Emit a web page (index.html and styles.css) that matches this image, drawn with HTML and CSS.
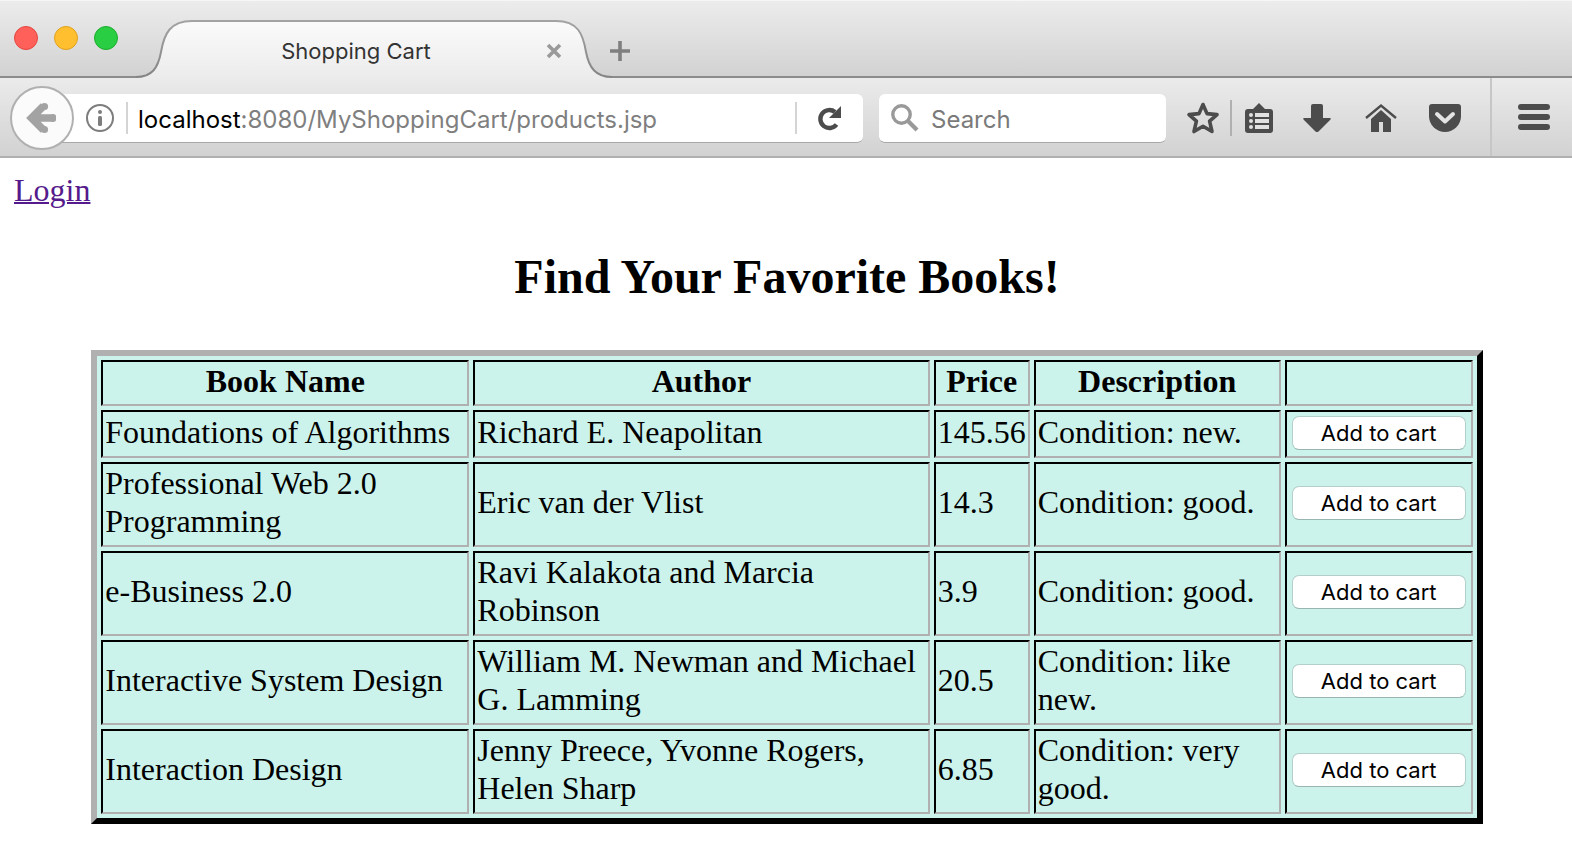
FILE: index.html
```html
<!DOCTYPE html>
<html lang="en">
<head>
<meta charset="utf-8">
<title>Shopping Cart</title>
<link rel="stylesheet" href="styles.css">
</head>
<body>
<header class="browser">
  <div class="tab-strip">
    <div class="lights">
      <button class="light light-close" aria-label="Close window"></button>
      <button class="light light-min" aria-label="Minimize window"></button>
      <button class="light light-max" aria-label="Zoom window"></button>
    </div>
    <div class="tab">
      <svg class="tab-shape" width="478" height="80" viewBox="0 0 478 80" aria-hidden="true">
        <defs>
          <linearGradient id="tabFill" x1="0" y1="0" x2="0" y2="1"><stop offset="0" stop-color="#fbfbfb"/><stop offset="1" stop-color="#ebebeb"/></linearGradient>
          <linearGradient id="tabLine" x1="0" y1="0" x2="0" y2="1"><stop offset="0" stop-color="#a3a3a3"/><stop offset="1" stop-color="#848484"/></linearGradient>
        </defs>
        <path fill="url(#tabFill)" d="M0 80V77C16 77 22 68 25 52C28 34 34 21 56 21H420C442 21 447 34 450 52C453 68 460 77 476 77V80Z"/>
        <path fill="none" stroke="url(#tabLine)" stroke-width="2" d="M0 77C16 77 22 68 25 52C28 34 34 21 56 21H420C442 21 447 34 450 52C453 68 460 77 476 77"/>
      </svg>
      <span class="tab-title">Shopping Cart</span>
      <button class="icon-btn tab-close" aria-label="Close tab">
        <svg width="16" height="16" viewBox="0 0 16 16"><path d="M2 2L14 14M14 2L2 14" stroke="#9a9a9a" stroke-width="3.600"/></svg>
      </button>
    </div>
    <button class="icon-btn new-tab" aria-label="New tab">
      <svg width="20" height="20" viewBox="0 0 20 20"><path d="M10 0V20M0 10H20" stroke="#7f7f7f" stroke-width="3.600"/></svg>
    </button>
  </div>

  <div class="toolbar">
    <button class="icon-btn back" aria-label="Back">
      <svg width="30" height="32" viewBox="0 0 30 32"><path d="M16.500 4L4.500 16L16.500 28M6 16H27" fill="none" stroke="#a3a3a3" stroke-width="7.600"/><path d="M24 12.200H27Q29 12.200 29 14V18Q29 19.800 27 19.800H24Z" fill="#a3a3a3"/><circle cx="17.500" cy="4.500" r="3.600" fill="#a3a3a3"/><circle cx="17.500" cy="27.500" r="3.600" fill="#a3a3a3"/></svg>
    </button>
    <div class="url-bar">
      <svg class="info" width="28" height="28" viewBox="0 0 28 28" aria-hidden="true"><circle cx="14" cy="14" r="13" fill="none" stroke="#7d7d7d" stroke-width="2"/><circle cx="14" cy="8" r="2" fill="#7d7d7d"/><rect x="12" y="12" width="4" height="10" rx="1.5" fill="#7d7d7d"/></svg>
      <span class="rule"></span>
      <span class="url"><b>localhost</b>:8080/MyShoppingCart/products.jsp</span>
      <span class="rule"></span>
      <button class="icon-btn reload" aria-label="Reload">
        <svg width="24" height="26" viewBox="0 0 24 26"><path d="M18.5 19.5A9 9 0 1 1 17 7" fill="none" stroke="#4c4c4c" stroke-width="4.4"/><path d="M23 1V13H11Z" fill="#4c4c4c"/></svg>
      </button>
    </div>
    <label class="search">
      <svg width="28" height="28" viewBox="0 0 28 28" aria-hidden="true"><circle cx="10.5" cy="10.5" r="8.7" fill="none" stroke="#999" stroke-width="3.4"/><path d="M16.500 16.500L26 26" stroke="#999" stroke-width="4.200"/></svg>
      <input class="search-input" type="text" placeholder="Search" aria-label="Search">
    </label>
    <div class="tools">
      <button class="icon-btn tool bookmark" aria-label="Bookmark this page">
        <svg width="32" height="34" viewBox="0 0 32 34"><path d="M16 3.500L20 12.600L30 13.600L22.600 20.200L25 30.500L16 25.200L7 30.500L9.400 20.200L2 13.600L12 12.600Z" fill="none" stroke="#4c4c4c" stroke-width="3.600" stroke-linejoin="round"/></svg>
      </button>
      <button class="icon-btn tool list" aria-label="Bookmarks list">
        <svg width="28" height="32" viewBox="0 0 28 32"><path fill="#4c4c4c" d="M14 1L20 7H25Q28 7 28 10V28Q28 31 25 31H3Q0 31 0 28V10Q0 7 3 7H8Z"/><path d="M10 13H24M10 19H24M10 25H24" stroke="#e2e2e2" stroke-width="4"/><circle cx="6" cy="13" r="2" fill="#e2e2e2"/><circle cx="6" cy="19" r="2" fill="#e2e2e2"/><circle cx="6" cy="25" r="2" fill="#e2e2e2"/></svg>
      </button>
      <button class="icon-btn tool" aria-label="Downloads">
        <svg width="28" height="28" viewBox="0 0 28 28"><path fill="#4c4c4c" d="M8 2Q8 0 10 0H18Q20 0 20 2V14H27Q28.500 14 27.500 15.500L15.500 27.500Q14 28.500 12.500 27.500L.5 15.500Q-.5 14 1 14H8Z"/></svg>
      </button>
      <button class="icon-btn tool" aria-label="Home">
        <svg width="32" height="28" viewBox="0 0 32 28"><path fill="#4c4c4c" d="M16 6L26 15V28H18V18H14V28H6V15Z"/><path d="M1 14L16 1.600L31 14" fill="none" stroke="#4c4c4c" stroke-width="2.400"/></svg>
      </button>
      <button class="icon-btn tool" aria-label="Save to Pocket">
        <svg width="32" height="28" viewBox="0 0 32 28"><path fill="#4c4c4c" d="M3 0H29Q32 0 32 3V12A16 16 0 0 1 0 12V3Q0 0 3 0Z"/><path d="M8 10L16 17.500L24 10" fill="none" stroke="#e4e4e4" stroke-width="4" stroke-linecap="round" stroke-linejoin="round"/></svg>
      </button>
    </div>
    <button class="icon-btn menu" aria-label="Open menu">
      <svg width="32" height="26" viewBox="0 0 32 26"><path d="M3 3H29M3 13H29M3 23H29" stroke="#4c4c4c" stroke-width="6" stroke-linecap="round"/></svg>
    </button>
  </div>
</header>

<main class="page">
  <a class="login" href="#">Login</a>
  <h1 class="heading">Find Your Favorite Books!</h1>
  <table class="books">
    <colgroup><col class="col-name"><col><col class="col-price"><col class="col-desc"><col class="col-action"></colgroup>
    <thead>
      <tr><th>Book Name</th><th>Author</th><th>Price</th><th>Description</th><th></th></tr>
    </thead>
    <tbody>
      <tr class="single"><td>Foundations of Algorithms</td><td>Richard E. Neapolitan</td><td>145.56</td><td>Condition: new.</td><td class="action"><button class="add">Add to cart</button></td></tr>
      <tr><td>Professional Web 2.0 Programming</td><td>Eric van der Vlist</td><td>14.3</td><td>Condition: good.</td><td class="action"><button class="add">Add to cart</button></td></tr>
      <tr><td>e-Business 2.0</td><td>Ravi Kalakota and Marcia Robinson</td><td>3.9</td><td>Condition: good.</td><td class="action"><button class="add">Add to cart</button></td></tr>
      <tr><td>Interactive System Design</td><td>William M. Newman and Michael G. Lamming</td><td>20.5</td><td>Condition: like new.</td><td class="action"><button class="add">Add to cart</button></td></tr>
      <tr><td>Interaction Design</td><td>Jenny Preece, Yvonne Rogers, Helen Sharp</td><td>6.85</td><td>Condition: very good.</td><td class="action"><button class="add">Add to cart</button></td></tr>
    </tbody>
  </table>
</main>
</body>
</html>
```

FILE: styles.css
```css
* { box-sizing: border-box; }

body {
  margin: 0;
  background: #fff;
  color: #000;
  font-family: "Liberation Serif", serif;
  font-size: 32px;
  line-height: 38px;
}

svg { display: block; flex: none; overflow: visible; }

.icon-btn {
  display: flex;
  align-items: center;
  justify-content: center;
  flex: none;
  padding: 0;
  border: 0;
  background: none;
}

/* Browser window */
.browser { font-family: Inter, sans-serif; }

.tab-strip {
  display: flex;
  height: 78px;
  padding-left: 14px;
  background: linear-gradient(#ececec, #d2d2d2);
  border-top: 1px solid #f6f6f6;
  border-bottom: 2px solid #8c8c8c;
}

.lights { display: flex; gap: 16px; margin: 25px 18px 0 0; }
.light { width: 24px; height: 24px; padding: 0; border: 1px solid; border-radius: 50%; }
.light-close { background: #ff6059; border-color: #e2463f; }
.light-min { background: #ffbf2f; border-color: #e0a11e; }
.light-max { background: #29ce42; border-color: #1dac2c; }

.tab {
  position: relative;
  display: flex;
  align-items: center;
  width: 474px;
  height: 60px;
  margin-top: 20px;
  padding: 0 48px 0 30px;
}
.tab-shape { position: absolute; left: 0; top: -21px; }
.tab-title {
  position: relative;
  flex: 1;
  color: #333;
  font-size: 22px;
  text-align: center;
}
.tab-close { position: relative; width: 16px; }
.new-tab { width: 20px; height: 60px; margin-top: 20px; }

.toolbar {
  display: flex;
  align-items: center;
  height: 80px;
  padding: 2px 0 0 10px;
  background: linear-gradient(#ebebeb, #d2d2d2);
  border-bottom: 2px solid #b0b0b0;
}

.back {
  position: relative;
  width: 64px;
  height: 64px;
  margin-right: -12px;
  border: 2px solid #b0b0b0;
  border-radius: 50%;
  background: #fbfbfb;
  z-index: 1;
}

.url-bar {
  display: flex;
  align-items: center;
  flex: 1;
  height: 49px;
  padding-left: 24px;
  border-bottom: 1px solid #a8a8a8;
  border-radius: 0 6px 6px 0;
  background: #fff;
}
.rule { width: 2px; height: 32px; background: #d4d4d4; }
.info { margin-right: 12px; }
.url { flex: 1; padding: 4px 0 0 10px; color: #7f7f7f; font-size: 24px; white-space: nowrap; }
.url b { color: #000; font-weight: 400; }
.reload { width: 66px; height: 48px; }

.search {
  display: flex;
  align-items: center;
  width: 287px;
  height: 49px;
  margin: 0 9px 0 16px;
  padding: 0 12px;
  gap: 12px;
  border-bottom: 1px solid #a8a8a8;
  border-radius: 6px;
  background: #fff;
}
.search-input {
  flex: 1;
  min-width: 0;
  padding: 4px 0 0;
  border: 0;
  outline: 0;
  background: none;
  font: 24px Inter, sans-serif;
}
.search-input::placeholder { color: #7a7a7a; opacity: 1; }

.tools { display: flex; margin-right: 13px; }
.tool { width: 64px; height: 36px; }
.bookmark { width: 57px; border-right: 2px solid #b0b0b0; }
.list { width: 53px; }
.menu {
  align-self: stretch;
  width: 82px;
  margin-top: -2px;
  padding-left: 4px;
  border-left: 2px solid #c6c6c6;
}

/* Page */
.page { padding: 13px 12px 44px 14px; }

.login { display: block; width: max-content; color: #551a8b; text-decoration-thickness: 2px; }

.heading {
  margin: 40px 0 45px;
  font-size: 48px;
  line-height: 56px;
  text-align: center;
}

.books {
  width: 90%;
  margin: 0 auto;
  table-layout: fixed;
  border: 6px solid;
  border-color: #b0b0b0 #000 #000 #b0b0b0;
  border-spacing: 4px;
  background: #ccf3eb;
}
.col-name { width: 368px; }
.col-price { width: 96px; }
.col-desc { width: 247px; }
.col-action { width: 188px; }

.books th, .books td {
  padding: 0 2px 5px;
  border: 2px solid;
  border-color: #000 #b0b0b0 #b0b0b0 #000;
}
.books th { height: 46px; line-height: 36px; }
.books td { height: 85px; text-align: left; }
.books .single td { height: 48px; }
.books .action { padding: 0 5px 3px; }

.add {
  display: block;
  width: 100%;
  height: 34px;
  padding: 0;
  border: 1px solid #b4cfca;
  border-bottom-color: #98b5af;
  border-radius: 7px;
  background: #fff;
  color: #000;
  font: 22px Inter, sans-serif;
}
```
